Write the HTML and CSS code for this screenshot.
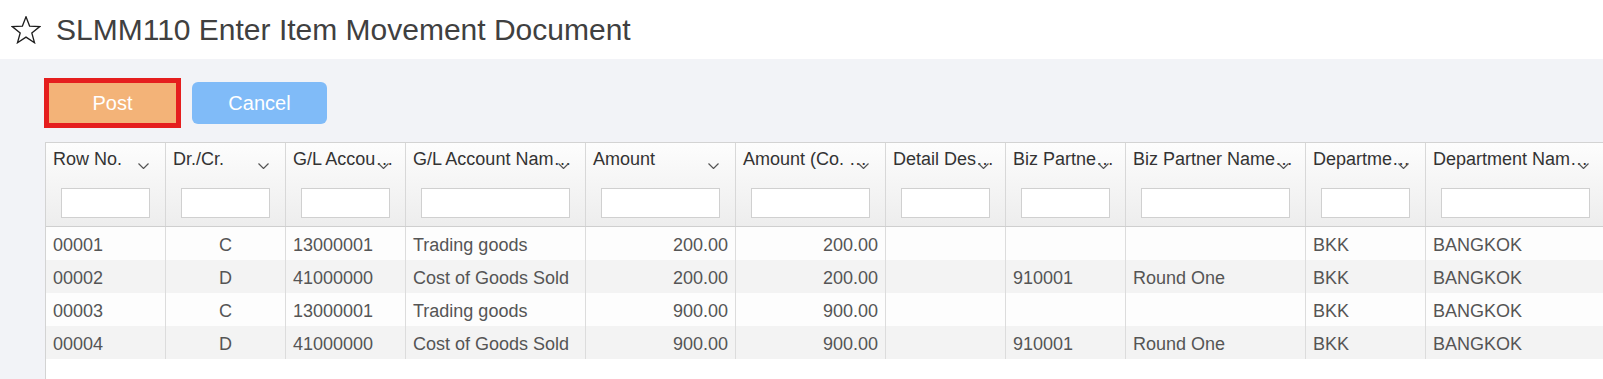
FILE: index.html
```html
<!DOCTYPE html>
<html lang="en">
<head>
<meta charset="utf-8">
<title>SLMM110 Enter Item Movement Document</title>
<link rel="stylesheet" href="styles.css">
</head>
<body>
<header class="titlebar">
  <svg class="star" width="30" height="28" viewBox="0 0 30 28" aria-hidden="true">
    <polygon points="15,0.8 18.59,10.07 28.79,10.52 20.8,16.88 23.52,26.73 15,21.1 6.48,26.73 9.2,16.88 1.21,10.52 11.41,10.07" />
  </svg>
  <h1 class="title">SLMM110 Enter Item Movement Document</h1>
</header>
<main class="content">
  <div class="actions">
    <div class="btn-wrap">
      <button class="btn btn-post" type="button">Post</button>
      <span class="highlight"></span>
    </div>
    <button class="btn btn-cancel" type="button">Cancel</button>
  </div>
  <div class="grid">
    <div class="ghead">
      <div class="hcell"><div class="hlabel">Row No.</div><svg class="chev" viewBox="0 0 11 6"><polyline points="0.5,0.5 5.5,5.5 10.5,0.5"/></svg><input class="filter" type="text"></div>
      <div class="hcell"><div class="hlabel">Dr./Cr.</div><svg class="chev" viewBox="0 0 11 6"><polyline points="0.5,0.5 5.5,5.5 10.5,0.5"/></svg><input class="filter" type="text"></div>
      <div class="hcell"><div class="hlabel">G/L Account No.</div><svg class="chev" viewBox="0 0 11 6"><polyline points="0.5,0.5 5.5,5.5 10.5,0.5"/></svg><input class="filter" type="text"></div>
      <div class="hcell"><div class="hlabel">G/L Account Name (Local)</div><svg class="chev" viewBox="0 0 11 6"><polyline points="0.5,0.5 5.5,5.5 10.5,0.5"/></svg><input class="filter" type="text"></div>
      <div class="hcell"><div class="hlabel">Amount</div><svg class="chev" viewBox="0 0 11 6"><polyline points="0.5,0.5 5.5,5.5 10.5,0.5"/></svg><input class="filter" type="text"></div>
      <div class="hcell"><div class="hlabel">Amount (Co. Currency)</div><svg class="chev" viewBox="0 0 11 6"><polyline points="0.5,0.5 5.5,5.5 10.5,0.5"/></svg><input class="filter" type="text"></div>
      <div class="hcell"><div class="hlabel">Detail Description</div><svg class="chev" viewBox="0 0 11 6"><polyline points="0.5,0.5 5.5,5.5 10.5,0.5"/></svg><input class="filter" type="text"></div>
      <div class="hcell"><div class="hlabel">Biz Partner Code</div><svg class="chev" viewBox="0 0 11 6"><polyline points="0.5,0.5 5.5,5.5 10.5,0.5"/></svg><input class="filter" type="text"></div>
      <div class="hcell"><div class="hlabel">Biz Partner Name (Local)</div><svg class="chev" viewBox="0 0 11 6"><polyline points="0.5,0.5 5.5,5.5 10.5,0.5"/></svg><input class="filter" type="text"></div>
      <div class="hcell"><div class="hlabel">Department Code</div><svg class="chev" viewBox="0 0 11 6"><polyline points="0.5,0.5 5.5,5.5 10.5,0.5"/></svg><input class="filter" type="text"></div>
      <div class="hcell"><div class="hlabel">Department Name (Local)</div><svg class="chev" viewBox="0 0 11 6"><polyline points="0.5,0.5 5.5,5.5 10.5,0.5"/></svg><input class="filter" type="text"></div>
    </div>
    <div class="gbody">
      <div class="row">
        <div class="cell">00001</div><div class="cell c">C</div><div class="cell">13000001</div><div class="cell">Trading goods</div><div class="cell r">200.00</div><div class="cell r">200.00</div><div class="cell"></div><div class="cell"></div><div class="cell"></div><div class="cell">BKK</div><div class="cell">BANGKOK</div>
      </div>
      <div class="row">
        <div class="cell">00002</div><div class="cell c">D</div><div class="cell">41000000</div><div class="cell">Cost of Goods Sold</div><div class="cell r">200.00</div><div class="cell r">200.00</div><div class="cell"></div><div class="cell">910001</div><div class="cell">Round One</div><div class="cell">BKK</div><div class="cell">BANGKOK</div>
      </div>
      <div class="row">
        <div class="cell">00003</div><div class="cell c">C</div><div class="cell">13000001</div><div class="cell">Trading goods</div><div class="cell r">900.00</div><div class="cell r">900.00</div><div class="cell"></div><div class="cell"></div><div class="cell"></div><div class="cell">BKK</div><div class="cell">BANGKOK</div>
      </div>
      <div class="row">
        <div class="cell">00004</div><div class="cell c">D</div><div class="cell">41000000</div><div class="cell">Cost of Goods Sold</div><div class="cell r">900.00</div><div class="cell r">900.00</div><div class="cell"></div><div class="cell">910001</div><div class="cell">Round One</div><div class="cell">BKK</div><div class="cell">BANGKOK</div>
      </div>
    </div>
  </div>
</main>
</body>
</html>
```

FILE: styles.css
```css
html, body {
  margin: 0;
  height: 100%;
  overflow: hidden;
}

body {
  font-family: "Liberation Sans", Arial, sans-serif;
  display: flex;
  flex-direction: column;
  background: #f2f3f7;
}

.titlebar {
  flex: none;
  height: 59px;
  background: #ffffff;
  display: flex;
  align-items: center;
  padding-left: 11px;
  gap: 15px;
}

.star {
  flex: none;
  fill: none;
  stroke: #1e1e1e;
  stroke-width: 1.3;
  stroke-linejoin: miter;
}

.title {
  margin: 0;
  font-size: 30px;
  font-weight: normal;
  color: #404040;
  white-space: nowrap;
}

.content {
  flex: 1;
  min-height: 0;
  display: flex;
  flex-direction: column;
  padding: 23px 0 0 45px;
  overflow: hidden;
}

.actions {
  flex: none;
  display: flex;
  gap: 12px;
  height: 42px;
  margin-bottom: 18px;
}

.btn-wrap {
  position: relative;
  display: flex;
}

.btn {
  width: 135px;
  height: 42px;
  border: none;
  border-radius: 6px;
  padding: 0;
  color: #ffffff;
  font-family: "Liberation Sans", Arial, sans-serif;
  font-size: 20px;
}

.btn-post {
  background: #f3b378;
}

.btn-cancel {
  background: #80bbf8;
}

.highlight {
  position: absolute;
  left: -1px;
  right: -1px;
  top: -4px;
  bottom: -4px;
  border: 5px solid #e51e1e;
}

.grid {
  --cols: 120px 120px 120px 180px 150px 150px 120px 120px 180px 120px 180px;
  flex: 1;
  width: 1560px;
  background: #ffffff;
  border-left: 1px solid #d3d3d3;
  border-top: 1px solid #d3d3d3;
}

.ghead {
  display: grid;
  grid-template-columns: var(--cols);
  border-bottom: 1px solid #cfcfcf;
  background: linear-gradient(#fdfdfd, #ededed);
}

.hcell {
  position: relative;
  box-sizing: border-box;
  height: 83px;
  padding-top: 6px;
  border-right: 1px solid #d8d8d8;
}

.hlabel {
  padding: 0 9px 0 7px;
  font-size: 18px;
  line-height: 21px;
  color: #333333;
  white-space: nowrap;
  overflow: hidden;
  text-overflow: ellipsis;
}

.chev {
  position: absolute;
  right: 16px;
  top: 20px;
  width: 11px;
  height: 6px;
  fill: none;
  stroke: #555555;
  stroke-width: 1.2;
}

.filter {
  display: block;
  box-sizing: border-box;
  width: calc(100% - 30px);
  height: 30px;
  margin: 18px 0 0 15px;
  padding: 0 4px;
  border: 1px solid #d0d0d0;
  background: #ffffff;
  font: 16px "Liberation Sans", Arial, sans-serif;
  outline: none;
}

.row {
  display: grid;
  grid-template-columns: var(--cols);
  height: 33px;
}

.row:nth-child(odd) {
  background: #fdfdfd;
}

.row:nth-child(even) {
  background: #f3f3f3;
}

.cell {
  box-sizing: border-box;
  border-right: 1px solid #dcdcdc;
  padding: 3px 7px 0;
  line-height: 30px;
  font-size: 18px;
  color: #555555;
  white-space: nowrap;
  overflow: hidden;
}

.cell.c {
  text-align: center;
}

.cell.r {
  text-align: right;
}
```
